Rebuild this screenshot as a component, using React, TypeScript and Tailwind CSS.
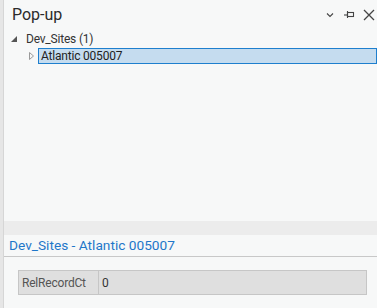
export default function App() {
  const font = { fontFamily: 'Roboto, "Noto Sans", sans-serif' }
  return (
    <div className="flex h-[308px] w-[377px] overflow-hidden bg-[#f7f8f8] text-[#333]" style={font}>
      {/* left dock strip */}
      <div className="w-[3px] shrink-0 bg-[#e6e6e6]" />
      <div className="w-px shrink-0 bg-[#d6d6d6]" />

      <div className="flex min-w-0 flex-1 flex-col">
        {/* header */}
        <div className="flex h-[30px] items-center justify-between pl-[8px] pr-[2px]">
          <span className="text-[16px] leading-none text-[#2b2b2b]">Pop-up</span>
          <div className="flex items-center gap-[8px] text-[#444]">
            <svg width="10" height="10" viewBox="0 0 10 10" fill="none" stroke="currentColor" strokeWidth="1.1">
              <path d="M2 3.5 L5 6.5 L8 3.5" />
            </svg>
            <svg width="12" height="10" viewBox="0 0 12 10" fill="none" stroke="currentColor" strokeWidth="1.1">
              <path d="M1 5 H4" />
              <rect x="4.5" y="2.5" width="6" height="4" />
              <path d="M4.5 1 V8" />
            </svg>
            <svg width="12" height="12" viewBox="0 0 12 12" fill="none" stroke="currentColor" strokeWidth="1.3">
              <path d="M1 1 L11 11 M11 1 L1 11" />
            </svg>
          </div>
        </div>

        {/* tree */}
        <div className="flex h-[17px] items-center text-[12px] tracking-[-0.2px]">
          <svg className="ml-[7px] mr-[9px]" width="6" height="6" viewBox="0 0 6 6">
            <path d="M6 0 L6 6 L0 6 Z" fill="#555" />
          </svg>
          <span>Dev_Sites (1)</span>
        </div>
        <div className="flex h-[17px] items-center text-[12px] tracking-[-0.2px]">
          <svg className="ml-[25px] mr-[4px]" width="5" height="8" viewBox="0 0 5 8">
            <path d="M0.5 0.5 L4.5 4 L0.5 7.5 Z" fill="none" stroke="#999" />
          </svg>
          <div className="flex h-[16px] flex-1 items-center border border-[#1e7fce] bg-[#c5dcef] pl-[2px] text-[#222]">
            Atlantic 005007
          </div>
        </div>

        <div className="flex-1" />

        {/* splitter */}
        <div className="h-[14px] bg-[#ececec]" />

        {/* detail title */}
        <div className="flex h-[22px] items-center border-b border-[#c8c8c8] pl-[5px] text-[13.7px] text-[#1f77c9]">
          Dev_Sites - Atlantic 005007
        </div>

        {/* attribute table */}
        <div className="pb-[13px] pl-[14px] pr-[10px] pt-[13px]">
          <div className="flex h-[25px] border border-[#c6c6c6] bg-[#dfdfdf] text-[12px] tracking-[-0.2px]">
            <div className="flex w-[80px] items-center border-r border-[#c6c6c6] pl-[3px] text-[#555]">
              RelRecordCt
            </div>
            <div className="flex items-center pl-[3px] text-[#333]">0</div>
          </div>
        </div>
      </div>
    </div>
  )
}
